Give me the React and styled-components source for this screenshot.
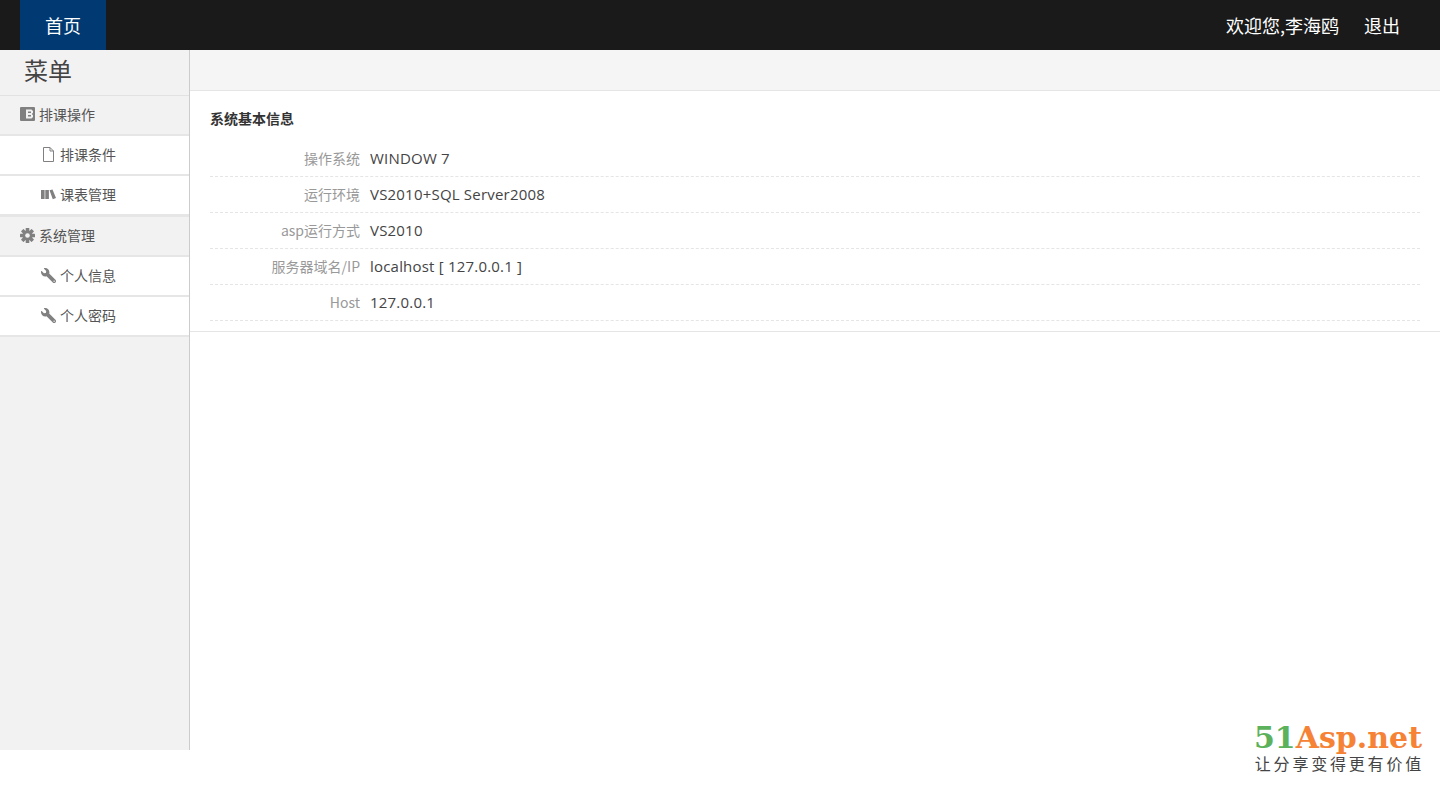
import React from 'react'
import styled, { createGlobalStyle } from 'styled-components'
import { FaWrench } from 'react-icons/fa'

const GlobalStyle = createGlobalStyle`
    html, body {
        margin: 0;
        padding: 0;
        background: #fff;
        font-family: "Noto Sans CJK SC", "Noto Sans", sans-serif;
    }
    * { box-sizing: border-box; }
`

const Page = styled.div`
    position: relative;
    height: 789px;
    overflow: hidden;
`

const TopBar = styled.header`
    display: flex;
    justify-content: space-between;
    height: 50px;
    background: #1a1a1a;
    padding: 0 40px 0 20px;
    color: #fff;
    font-size: 18px;
`

const HomeTab = styled.a`
    display: flex;
    align-items: center;
    justify-content: center;
    width: 86px;
    background: #013a72;
`

const UserArea = styled.div`
    display: flex;
    align-items: center;
    gap: 25px;
`

const Body = styled.div`
    display: flex;
    height: 700px;
`

const Sidebar = styled.aside`
    width: 190px;
    flex: none;
    background: #f2f2f2;
    border-right: 1px solid #ccc;
`

const MenuTitle = styled.div`
    height: 46px;
    padding-left: 24px;
    font-size: 24px;
    line-height: 40px;
    color: #444;
    border-bottom: 1px solid #e2e2e2;
`

const GroupRow = styled.div`
    display: flex;
    align-items: center;
    gap: 4px;
    height: ${(p) => (p.$divided ? '41px' : '40px')};
    padding: 0 0 2px 20px;
    font-size: 14px;
    color: #555;
    background: #f2f2f2;
    border-top: ${(p) => (p.$divided ? '1px solid #e6e6e6' : 'none')};
    border-bottom: 2px solid #e6e6e6;
    svg { color: #808080; flex: none; }
`

const ItemRow = styled(GroupRow)`
    padding-left: 41px;
    background: #fff;
`

const MirroredWrench = styled(FaWrench)`
    transform: scaleX(-1);
`

const Main = styled.main`
    flex: 1;
`

const SubBar = styled.div`
    height: 41px;
    background: #f5f5f5;
    border-bottom: 1px solid #e5e5e5;
`

const InfoPanel = styled.section`
    padding: 16px 20px 10px;
    border-bottom: 1px solid #e5e5e5;
`

const PanelTitle = styled.h4`
    margin: 0 0 4px;
    height: 30px;
    line-height: 23px;
    font-size: 14px;
    font-weight: 700;
    color: #333;
`

const InfoRow = styled.div`
    display: flex;
    align-items: center;
    height: 36px;
    padding-bottom: 2px;
    border-bottom: 1px dashed #e5e5e5;
`

const Label = styled.span`
    width: 150px;
    text-align: right;
    font-size: 14px;
    color: #999;
`

const Value = styled.span`
    margin-left: 10px;
    font-family: "Open Sans", "Noto Sans CJK SC", sans-serif;
    font-size: 15px;
    letter-spacing: 0.2px;
    color: #444;
`

const Logo = styled.div`
    position: absolute;
    right: 18px;
    bottom: 16px;
    display: flex;
    flex-direction: column;
    align-items: flex-end;
`

const LogoMark = styled.div`
    font-family: "DejaVu Serif", serif;
    font-weight: 700;
    font-size: 30px;
    line-height: 30px;
    color: #f58235;
    span { color: #5cb25c; }
`

const LogoSlogan = styled.div`
    font-size: 16px;
    line-height: 20px;
    letter-spacing: 2.8px;
    margin-right: -2px;
    color: #444;
`

const ContactIcon = () => (
    <svg width="15" height="14" viewBox="0 0 15 14">
        <path fill="currentColor" fillRule="evenodd" d="M1 0h13a1 1 0 0 1 1 1v12a1 1 0 0 1-1 1H1a1 1 0 0 1-1-1V1a1 1 0 0 1 1-1zM6 2.500v9h5.500l1.500-1.500V8.200L11.800 7 13 5.800V4L11.500 2.500zM8 4.500h3V6H8zM8 8h3v1.500H8z" />
    </svg>
)

const FileIcon = () => (
    <svg width="15" height="15" viewBox="0 0 15 15" fill="none" stroke="currentColor">
        <path d="M2.500 .5h6.500l3.500 3.500v10.500h-10zM9 .5v3.500h3.500" />
    </svg>
)

const BooksIcon = () => (
    <svg width="15" height="11" viewBox="0 0 15 11">
        <path fill="currentColor" d="M0 1h3.600v9H0zM4.300 1h3.600v9H4.300zM8.500 1.200l3-.8L15 9l-3.200 1.300z" />
    </svg>
)

const CogIcon = () => (
    <svg width="15" height="15" viewBox="0 0 15 15">
        <g fill="currentColor">
            {[0, 45, 90, 135].map((a) => (
                <rect key={a} x="5.700" y="0" width="3.600" height="15" rx=".5" transform={`rotate(${a} 7.500 7.500)`} />
            ))}
        </g>
        <circle cx="7.500" cy="7.500" r="3.800" fill="none" stroke="currentColor" strokeWidth="2.600" />
        <circle cx="7.500" cy="7.500" r="2.300" fill="#f2f2f2" />
    </svg>
)

const menu = [
    { icon: <ContactIcon />, text: '排课操作', group: true },
    { icon: <FileIcon />, text: '排课条件' },
    { icon: <BooksIcon />, text: '课表管理' },
    { icon: <CogIcon />, text: '系统管理', group: true, divided: true },
    { icon: <MirroredWrench size={15} />, text: '个人信息' },
    { icon: <MirroredWrench size={15} />, text: '个人密码' },
]

const info = [
    ['操作系统', 'WINDOW 7'],
    ['运行环境', 'VS2010+SQL Server2008'],
    ['asp运行方式', 'VS2010'],
    ['服务器域名/IP', 'localhost [ 127.0.0.1 ]'],
    ['Host', '127.0.0.1'],
]

export default function App() {
    return (
        <Page>
            <GlobalStyle />
            <TopBar>
                <HomeTab>首页</HomeTab>
                <UserArea>
                    <span>欢迎您,李海鸥</span>
                    <span>退出</span>
                </UserArea>
            </TopBar>
            <Body>
                <Sidebar>
                    <MenuTitle>菜单</MenuTitle>
                    {menu.map((m) => {
                        const Row = m.group ? GroupRow : ItemRow
                        return <Row key={m.text} $divided={m.divided}>{m.icon}<span>{m.text}</span></Row>
                    })}
                </Sidebar>
                <Main>
                    <SubBar />
                    <InfoPanel>
                        <PanelTitle>系统基本信息</PanelTitle>
                        {info.map(([k, v]) => (
                            <InfoRow key={k}>
                                <Label>{k}</Label>
                                <Value>{v}</Value>
                            </InfoRow>
                        ))}
                    </InfoPanel>
                </Main>
            </Body>
            <Logo>
                <LogoMark><span>51</span>Asp.net</LogoMark>
                <LogoSlogan>让分享变得更有价值</LogoSlogan>
            </Logo>
        </Page>
    )
}
